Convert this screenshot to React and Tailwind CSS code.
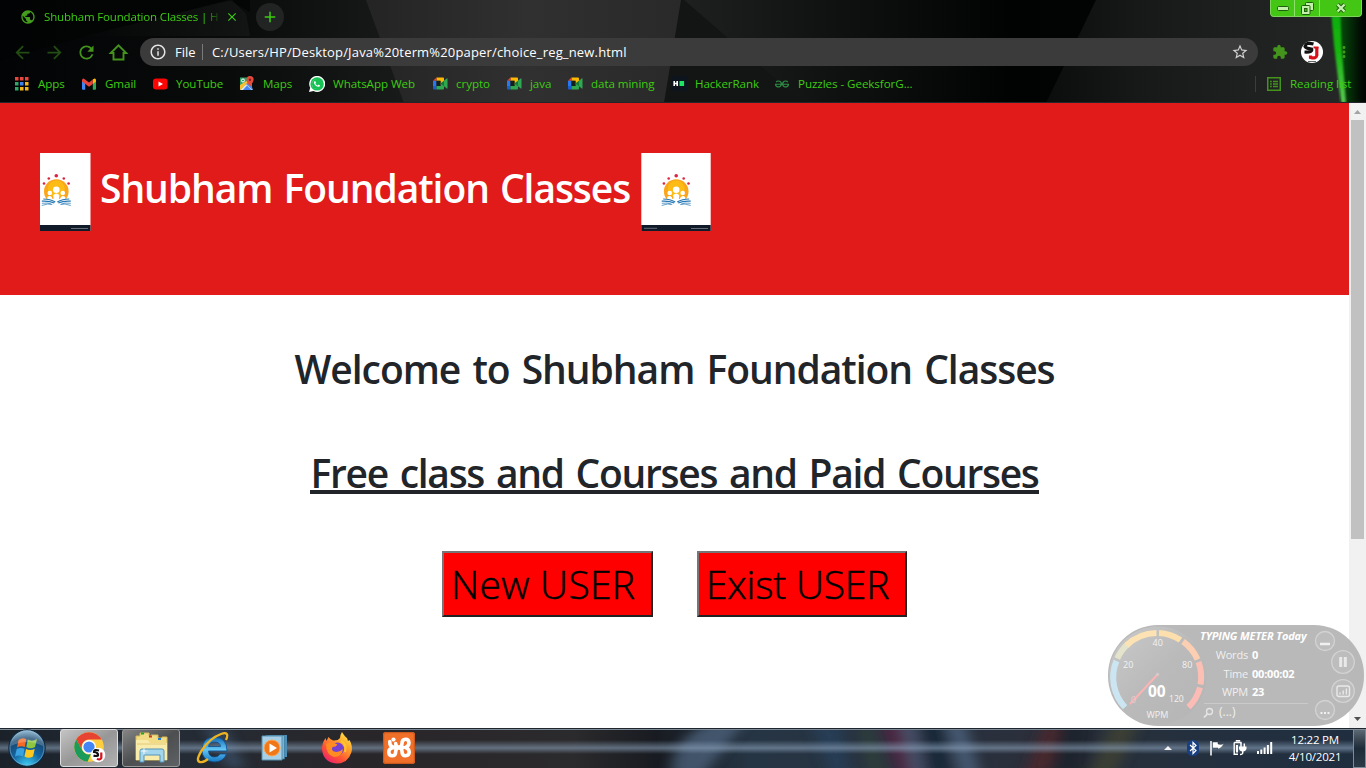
import { MdArrowBack, MdArrowForward, MdRefresh, MdPublic, MdInfoOutline, MdStarBorder, MdExtension, MdMoreVert, MdClose, MdAdd } from "react-icons/md";
import { SiGeeksforgeeks } from "react-icons/si";
import { FaWhatsapp } from "react-icons/fa";

function ThemeBackdrop() {
  return (
    <svg className="absolute inset-0" width="1366" height="103" viewBox="0 0 1366 103" preserveAspectRatio="none">
      <defs>
        <linearGradient id="tbLeft" x1="0" x2="1">
          <stop offset="0" stopColor="#030405" />
          <stop offset=".55" stopColor="#090a0a" />
          <stop offset="1" stopColor="#1a1c1b" />
        </linearGradient>
        <linearGradient id="tbWedge" x1="0" x2="1">
          <stop offset="0" stopColor="#050606" />
          <stop offset="1" stopColor="#191b1b" />
        </linearGradient>
        <linearGradient id="tbMid" x1="0" x2="1">
          <stop offset="0" stopColor="#242424" />
          <stop offset=".5" stopColor="#303030" />
          <stop offset="1" stopColor="#292929" />
        </linearGradient>
        <linearGradient id="tbRight" x1="684" x2="1010" y1="0" y2="0" gradientUnits="userSpaceOnUse">
          <stop offset="0" stopColor="#1e1f1f" />
          <stop offset=".45" stopColor="#101111" />
          <stop offset="1" stopColor="#010303" />
        </linearGradient>
        <linearGradient id="tbFar" x1="1050" x2="1340" y1="0" y2="0" gradientUnits="userSpaceOnUse">
          <stop offset="0" stopColor="#0c0d0d" />
          <stop offset=".3" stopColor="#171818" />
          <stop offset="1" stopColor="#252626" />
        </linearGradient>
        <linearGradient id="tbEdge" x1="1335" x2="1366" y1="0" y2="0" gradientUnits="userSpaceOnUse">
          <stop offset="0" stopColor="#075c0c" />
          <stop offset=".8" stopColor="#020e03" />
          <stop offset="1" stopColor="#010301" />
        </linearGradient>
        <linearGradient id="tbBeam" x1="0" x2="0" y1="0" y2="1">
          <stop offset="0" stopColor="#0ca808" />
          <stop offset=".5" stopColor="#16b70e" />
          <stop offset="1" stopColor="#5ac653" />
        </linearGradient>
        <filter id="soft"><feGaussianBlur stdDeviation=".8" /></filter>
      </defs>
      <rect width="1366" height="103" fill="#020303" />
      <rect width="420" height="103" fill="url(#tbLeft)" />
      <path d="M0 60 L86 36 L228 0 L250 12 L250 0 L0 0Z" fill="#030404" opacity=".8" />
      <path d="M84 36 L232 0 L246 14 L250 36Z" fill="url(#tbWedge)" opacity=".6" />
      <path d="M366 0H688L665 103H404Z" fill="url(#tbMid)" />
      <path d="M684 0H1040V103H664Z" fill="url(#tbRight)" />
      <path d="M684 0L803 103H664L681 0Z" fill="#131414" />
      <path d="M1096 0H1340V103H1046Z" fill="url(#tbFar)" />
      <path d="M1331 0H1366V103H1343Z" fill="url(#tbEdge)" />
      <path d="M1330 0H1340L1341.500 45 1346 103H1341L1334 45Z" fill="url(#tbBeam)" filter="url(#soft)" />
      <rect y="102" width="1366" height="1" fill="#24252a" />
    </svg>
  );
}

function WindowControls() {
  return (
    <div className="absolute left-[1270px] top-0 flex h-[17px] w-[92px] divide-x divide-[#8de06b] overflow-hidden rounded-b border border-t-0 border-[#7ed35c] bg-[#43c614]">
      <div className="flex w-[24px] items-center justify-center">
        <svg width="12" height="6" viewBox="0 0 12 6"><rect x=".5" y="1.500" width="11" height="4" rx="1" fill="#c4f2ad" stroke="#1f5e0c" /></svg>
      </div>
      <div className="flex w-[25px] items-center justify-center">
        <svg width="13" height="13" viewBox="0 0 13 13" fill="#c4f2ad" stroke="#1f5e0c">
          <rect x="4.500" y=".5" width="8" height="8" rx="1" />
          <rect x=".5" y="3.500" width="8.500" height="9" rx="1" />
          <rect x="3.500" y="6.500" width="2.500" height="3" fill="#41bd14" />
        </svg>
      </div>
      <div className="flex flex-1 items-center justify-center">
        <svg width="12" height="12" viewBox="0 0 12 12">
          <path d="M2.500 2.500L9.500 9.500M9.500 2.500L2.500 9.500" stroke="#1f5e0c" strokeWidth="4.200" />
          <path d="M2.500 2.500L9.500 9.500M9.500 2.500L2.500 9.500" stroke="#c4f2ad" strokeWidth="2.400" />
        </svg>
      </div>
    </div>
  );
}

const appColors = ["fill-[#e8453c]", "fill-[#e8453c]", "fill-[#e8453c]", "fill-[#2fa866]", "fill-[#3b82f0]", "fill-[#f2b518]", "fill-[#2fa866]", "fill-[#f2b518]", "fill-[#f2b518]"];

const AppsIcon = () => (
  <svg className="-ml-[2px]" width="14" height="14" viewBox="0 0 14 14">
    {appColors.map((c, i) => <rect key={i} x={(i % 3) * 5} y={Math.floor(i / 3) * 5} width="3.500" height="3.500" className={c} />)}
  </svg>
);
const GmailIcon = () => (
  <svg className="-ml-[2px]" width="14" height="12" viewBox="0 0 14 12">
    <path d="M0 2v9q0 .7.8.7H3.200V5Z" fill="#4285f4" />
    <path d="M14 2v9q0 .7-.8.7H10.800V5Z" fill="#34a853" />
    <path d="M10.800 1.500L12 .7Q14 .2 14 2.200V3.600L10.800 6Z" fill="#fbbc04" />
    <path d="M0 3.600V2.200Q.2.200 2 .7L7 4.500 10.800 1.500V6L7 8.800Z" fill="#ea4335" />
  </svg>
);
const YouTubeIcon = () => (
  <svg width="15" height="12" viewBox="0 0 15 12"><rect y=".5" width="14.500" height="11" rx="3" fill="#fb0505" /><path d="M5.500 3.500v5L10 6Z" fill="#fff" /></svg>
);
const MapsIcon = () => (
  <svg className="-ml-[2px]" width="15" height="15" viewBox="0 0 15 15">
    <path d="M1 1.500H10L13 6V14H1Z" fill="#34a168" />
    <path d="M1 14L8 7l6 7Z" fill="#dfe3e8" />
    <path d="M4 14L8 9.500 12.500 14Z" fill="#4285f4" />
    <path d="M1 9V14L9 6.500 7.500 5Z" fill="#fbc02d" />
    <path d="M8.500 7L13.500 12V14L7 8Z" fill="#4a8bf5" />
    <circle cx="4" cy="4.500" r="1.500" fill="none" stroke="#fff" />
    <path d="M11 0a3.600 3.600 0 0 1 3.600 3.700Q14.400 6 11 10.500 7.600 6 7.500 3.700A3.600 3.600 0 0 1 11 0Z" fill="#e64a3c" />
    <circle cx="11" cy="3.700" r="1.200" fill="#7d1f1a" />
  </svg>
);
const WhatsAppIcon = () => (
  <span className="relative -ml-[2px] flex size-4 shrink-0 items-center justify-center">
    <svg className="absolute" width="16" height="16" viewBox="0 0 16 16"><path d="M0 16L1.200 11.800A8 8 0 1 1 4.500 15Z" fill="#fff" /><circle cx="8.100" cy="7.900" r="6.700" fill="#17c254" /></svg>
    <FaWhatsapp className="relative size-[14px] text-white [clip-path:circle(4.600px)]" />
  </span>
);
const MeetIcon = () => (
  <svg className="-ml-px" width="15" height="13" viewBox="0 0 15 13">
    <path d="M3.500 .5H10a1 1 0 0 1 1 1V6.500L7.500 8V3.800H3.500Z" fill="#fbb904" />
    <path d="M3.500 .5V3.800H0Z" fill="#ea4335" />
    <path d="M0 3.800H3.500V9H0Z" fill="#2878ef" />
    <path d="M0 9H3.500V12.500H1Q0 12.500 0 11.500Z" fill="#1a60d0" />
    <path d="M3.500 9H7.500V6.500L14 1.200Q14.500 1 14.500 1.800V11Q14.500 12 13.800 11.500L11 9.300V11.500a1 1 0 0 1-1 1H3.500Z" fill="#2fa84f" />
    <path d="M3.500 3.800H7.500V9H3.500Z" fill="#14201a" />
    <path d="M7.500 6.500L11 3.800V9.200Z" fill="#16773a" />
  </svg>
);
const HackerRankIcon = () => (
  <svg width="15" height="15" viewBox="0 0 15 15"><rect width="15" height="15" rx="1.500" fill="#0e141e" /><path d="M2.200 5V10M5.200 5V10M2.200 7.500H5.200" stroke="#fff" strokeWidth="1.600" /><rect x="7.500" y="5" width="4.600" height="5" fill="#1ee665" /></svg>
);
const GeeksIcon = () => <SiGeeksforgeeks className="-ml-[2px] size-[14px] text-[#2f8d46]" />;

const bookmarks = [
  { label: "Apps", Icon: AppsIcon, w: "w-[67px]" },
  { label: "Gmail", Icon: GmailIcon, w: "w-[71px]" },
  { label: "YouTube", Icon: YouTubeIcon, w: "w-[87px]" },
  { label: "Maps", Icon: MapsIcon, w: "w-[70px]" },
  { label: "WhatsApp Web", Icon: WhatsAppIcon, w: "w-[123px]" },
  { label: "crypto", Icon: MeetIcon, w: "w-[74px]" },
  { label: "java", Icon: MeetIcon, w: "w-[61px]" },
  { label: "data mining", Icon: MeetIcon, w: "w-[104px]" },
  { label: "HackerRank", Icon: HackerRankIcon, w: "w-[103px]" },
  { label: "Puzzles - GeeksforG...", Icon: GeeksIcon, w: "w-[145px]" },
];

function BrowserChrome() {
  return (
    <header className="relative h-[103px] text-[#3ccc12]">
      <ThemeBackdrop />
      <div className="relative flex h-[103px] flex-col">
        <div className="flex h-[34px] items-center pl-5">
          <MdPublic className="mr-2 size-4 text-[#449d1c]" />
          <span className="mr-[5px] w-[176px] whitespace-nowrap text-[11.500px] tracking-[-0.160px] [mask-image:linear-gradient(to_right,black_91%,rgba(0,0,0,0.2)_99%)]">Shubham Foundation Classes | H</span>
          <MdClose className="size-[14px]" />
          <span className="ml-[17px] flex size-7 items-center justify-center rounded-full bg-[#222424]"><MdAdd className="size-[18px]" /></span>
        </div>
        <div className="flex h-9 items-center pl-[12px] text-[#43931d]">
          <MdArrowBack className="mr-[11px] size-[21px] text-[#234d13]" />
          <MdArrowForward className="mr-[11px] size-[21px] text-[#234d13]" />
          <MdRefresh className="mr-[11px] size-[21px]" />
          <svg className="mr-[11px]" width="21" height="21" viewBox="0 0 21 21"><path d="M2.800 11L10.500 3.300L18.200 11H15.500V17.500H5.500V11Z" fill="none" stroke="currentColor" strokeWidth="1.900" /></svg>
          <div className="flex h-7 w-[1118px] items-center rounded-full bg-[#3b3b3b] pl-[9px] text-[13px] text-white">
            <MdInfoOutline className="mr-2 size-[18px] text-[#e4e4e4]" />
            <span className="w-[27px] pt-[2px]">File</span>
            <span className="mr-[9px] h-4 w-px bg-[#7a7a7a]" />
            <span className="flex-1 whitespace-nowrap pt-[2px] tracking-[0.170px]">C:/Users/HP/Desktop/Java%20term%20paper/choice_reg_new.html</span>
            <MdStarBorder className="mr-[9px] size-[18px] text-[#d0d0d0]" />
          </div>
          <MdExtension className="ml-[14px] size-[16px]" />
          <svg className="ml-[13px]" width="22" height="22" viewBox="0 0 22 22">
            <circle cx="11" cy="11" r="11" fill="#fff" />
            <path d="M12.500 3Q5 .8 4 5.500 5 7.500 10.500 8 12 11.500 3.500 11" fill="none" stroke="#111" strokeWidth="3.200" />
            <path d="M15.800 6V14.500Q15 18 9.500 16.500V14.500" fill="none" stroke="#d8101a" strokeWidth="3.200" />
            <path d="M12.500 6.500H17.500" stroke="#d8101a" strokeWidth="2" />
            <path d="M7 20.500H15" stroke="#666" />
          </svg>
          <MdMoreVert className="ml-[12px] size-[18px] text-[#3f9a1c]" />
        </div>
        <div className="flex h-7 items-center pl-[15px] text-[11.600px] tracking-[-0.060px]">
          {bookmarks.map(({ label, Icon, w }) => (
            <div key={label} className={"flex shrink-0 items-center " + w}>
              <span className="mr-2 flex w-[15px] items-center justify-center"><Icon /></span>
              <span className="whitespace-nowrap">{label}</span>
            </div>
          ))}
          <div className="ml-auto flex w-[111px] items-center">
            <span className="mr-[11px] h-4 w-px bg-[#245014]" />
            <svg className="mr-[9px]" width="14" height="14" viewBox="0 0 14 14" fill="none" stroke="#43931d"><rect x=".75" y=".75" width="12.500" height="12.500" strokeWidth="1.500" /><path d="M3 4.500H4.800M6 4.500H11M3 7H4.800M6 7H11M3 9.500H4.800M6 9.500H11" strokeWidth="1.300" /></svg>
            <span className="whitespace-nowrap">Reading list</span>
          </div>
        </div>
      </div>
      <WindowControls />
    </header>
  );
}

function SunriseArt({ x }) {
  return (
    <g transform={`translate(${x} 0)`}>
      <circle cx="0" cy="38.500" r="12.300" fill="#fba51a" />
      <circle cx="0" cy="36" r="8.500" fill="#fdbb16" />
      <g fill="#dc2340"><circle cy="22.800" r="1.800" /><circle cx="-7.500" cy="25.500" r="1.300" /><circle cx="7.500" cy="25.500" r="1.300" /><circle cx="-12.300" cy="30.500" r="1.300" /><circle cx="12.300" cy="30.500" r="1.300" /></g>
      <g fill="#fff"><circle cy="36.800" r="3.300" /><path d="M-2.700 48L-3 42Q0 39 3 42L2.700 48Z" /><circle cx="-6.500" cy="40" r="2.300" /><circle cx="6.500" cy="40" r="2.300" /><path d="M-9 48V44Q-6.500 42-4.500 44L-3 48ZM9 48V44Q6.500 42 4.500 44L3 48Z" /><path d="M-14 46H14V54H-14Z" /></g>
      <g fill="none" stroke="#2779b5" strokeWidth="1.200"><path d="M-13 46Q-6 46-1 49M13 46Q6 46 1 49M-14.500 48.200Q-7 47.700-2 50M14.500 48.200Q7 47.700 2 50" /><path d="M-14.500 50.300Q-8 49.500-5 51M14.500 50.300Q8 49.500 5 51M-14.500 52.500Q-8 50-4 51.500M14.500 52.500Q8 50 4 51.500" strokeWidth=".7" /></g>
    </g>
  );
}

function PageHeader() {
  return (
    <div className="flex h-[192px] items-start bg-[#e11a1a] pl-10 pt-[50px]">
      <svg width="51" height="78" viewBox="0 0 51 78"><rect width="50.500" height="78" fill="#fff" /><SunriseArt x={16.300} /><rect y="72" width="50.500" height="6" fill="#101a29" /><path d="M31 75.500H48" stroke="#8b929b" strokeWidth=".7" /></svg>
      <h1 className="ml-[9px] mt-[11px] w-[541px] whitespace-nowrap text-[39px] font-semibold leading-[48px] tracking-[-1.060px] text-white [word-spacing:2px]">Shubham Foundation Classes</h1>
      <svg width="70" height="78" viewBox="0 0 70 78"><rect x=".3" width="69.400" height="78" fill="#fff" /><SunriseArt x={35.200} /><rect x=".3" y="72" width="69.400" height="6" fill="#101a29" /><path d="M3 75.300H16M50 75.500H67" stroke="#8b929b" strokeWidth=".7" /></svg>
    </div>
  );
}

const userButton = "h-[66px] whitespace-nowrap border-2 border-b-[#222] border-l-[#767676] border-r-[#222] border-t-[#767676] bg-[#ff0000] pb-[3px] pl-[7px] pt-[3px] text-left text-[39px] font-light leading-[56px] text-black [-webkit-text-stroke:0.5px_black]";

function PageContent() {
  return (
    <main className="flex-1 bg-white">
      <PageHeader />
      <div className="flex flex-col items-center text-[39px] font-semibold leading-[48px] text-[#212529] [word-spacing:3px]">
        <h2 className="mt-[50px] whitespace-nowrap tracking-[-1.030px]">Welcome to Shubham Foundation Classes</h2>
        <h2 className="mt-14 h-[45px] whitespace-nowrap border-b-4 border-[#212529] tracking-[-1.290px]">Free class and Courses and Paid Courses</h2>
      </div>
      <div className="mt-[57px] flex justify-center gap-11">
        <button className={userButton + " w-[211px] tracking-[0.300px]"}>New USER</button>
        <button className={userButton + " w-[210px] tracking-[-0.200px]"}>Exist USER</button>
      </div>
    </main>
  );
}

function Scrollbar() {
  return (
    <div className="flex w-[17px] flex-col items-center bg-[#f1f1f1]">
      <svg width="17" height="17" viewBox="0 0 17 17"><path d="M5 11L8.500 7L12 11Z" fill="#a3a3a3" /></svg>
      <div className="h-[419px] w-[13px] bg-[#c1c1c1]" />
      <svg className="mt-auto" width="17" height="17" viewBox="0 0 17 17"><path d="M5 6L8.500 10L12 6Z" fill="#505050" /></svg>
    </div>
  );
}

const dial = [
  { d: "M24.500 89.700A43.500 43.500 0 0 1 15.900 43.500", c: "#cbe6f2" },
  { d: "M16.800 41A43.500 43.500 0 0 1 28 26", c: "#e4e4cc" },
  { d: "M26 28A43.500 43.500 0 0 1 56 15.500", c: "#fde3b4" },
  { d: "M58.500 15.500A43.500 43.500 0 0 1 80 22.500", c: "#fddfae" },
  { d: "M82.500 24A43.500 43.500 0 0 1 97 42", c: "#fcceb2" },
  { d: "M98 44.500A43.500 43.500 0 0 1 100 67", c: "#fcbfb4" },
  { d: "M99.500 70A43.500 43.500 0 0 1 88 89.700", c: "#fcbcb6" },
];

function TypingMeter() {
  return (
    <aside className="absolute left-[1108px] top-[625px] h-[101px] w-[256px] rounded-[50px] bg-[#b1b1b1]/90 text-white">
      <svg className="absolute inset-0" width="256" height="101" viewBox="0 0 256 101">
        <defs><linearGradient id="face" x1="0" y1="0" x2="1" y2="1"><stop offset="0" stopColor="#cacaca" /><stop offset=".5" stopColor="#bababa" /><stop offset="1" stopColor="#b5b5b5" /></linearGradient></defs>
        <circle cx="50" cy="50.500" r="49" fill="url(#face)" />
        <g transform="translate(-7.500 -7.500)" fill="none" strokeWidth="6">
          {dial.map(({ d, c }) => <path key={d} d={d} stroke={c} />)}
        </g>
        <path d="M49.500 49.500L22 79" stroke="#fbb4b4" strokeWidth="2" />
        <circle cx="49.500" cy="49.500" r="1.800" fill="#d6c8c8" />
        <g fill="#f2f2f2" fontSize="9">
          <text x="44.500" y="20.500">40</text><text x="15" y="42.500">20</text><text x="74" y="42.500">80</text><text x="23" y="78" fill="#e5cccc">0</text>
          <text x="61" y="77" fontSize="8.600">120</text><text x="38.500" y="93" fontSize="9">WPM</text>
          <text x="40" y="71.500" fontSize="15.500" fontWeight="700" fill="#fff">00</text>
        </g>
        <path d="M96 78.500H200" stroke="#cacaca" />
        <g fill="#bdbdbd" stroke="#d3d3d3" strokeWidth="1.300">
          <circle cx="217" cy="16" r="9.500" /><circle cx="235" cy="37" r="11.300" /><circle cx="235" cy="66" r="11.300" /><circle cx="217" cy="85" r="9.500" />
        </g>
        <path d="M212 19H222" stroke="#f0f0f0" strokeWidth="2.500" />
        <path d="M232.700 32V42M237.300 32V42" stroke="#e9e9e9" strokeWidth="3" />
        <g stroke="#e9e9e9" fill="none" strokeWidth="1.400"><rect x="229" y="61" width="12.500" height="10.500" rx="2" /><path d="M232 69.500V67.500M235.200 69.500V65.500M238.400 69.500V63.500" /></g>
        <path d="M212.500 88H214.500M216 88H218M219.500 88H221.500" stroke="#f0f0f0" strokeWidth="2" />
        <g stroke="#e6e6e6" fill="none" strokeWidth="1.300"><circle cx="101.500" cy="86.500" r="3" /><path d="M99.300 89L96 92.500" strokeWidth="1.800" /></g>
      </svg>
      <div className="relative flex w-[200px] flex-col pl-[92px] pt-[3px]">
        <div className="h-[18px] w-[108px] whitespace-nowrap text-[11px] font-bold italic leading-[15px] tracking-[-0.140px]">TYPING METER Today</div>
        <dl className="grid grid-cols-[48px_1fr] gap-x-1 text-[11px] leading-[18.500px] tracking-[-0.200px]">
          <dt className="text-right text-[#f0f0f0]">Words</dt><dd className="font-bold">0</dd>
          <dt className="text-right text-[#f0f0f0]">Time</dt><dd className="font-bold">00:00:02</dd>
          <dt className="text-right text-[#f0f0f0]">WPM</dt><dd className="font-bold">23</dd>
        </dl>
        <div className="pl-[19px] pt-[2px] text-[12px] leading-4 text-[#f0f0f0]">(...)</div>
      </div>
    </aside>
  );
}

function TaskbarBackdrop() {
  return (
    <svg className="absolute inset-0" width="1366" height="40" viewBox="0 0 1366 40">
      <defs>
        <linearGradient id="bar" x1="0" x2="1"><stop offset="0" stopColor="#1b2129" /><stop offset=".12" stopColor="#242c36" /><stop offset=".27" stopColor="#292629" /><stop offset=".42" stopColor="#2b2a2c" /><stop offset=".48" stopColor="#181b21" /><stop offset=".55" stopColor="#263544" /><stop offset=".75" stopColor="#2a2f3b" /><stop offset=".84" stopColor="#26303d" /><stop offset="1" stopColor="#1f2e40" /></linearGradient>
        <linearGradient id="band" x1="0" y1="0" x2="0" y2="1"><stop offset=".3" stopColor="#8fa6bf" stopOpacity="0" /><stop offset=".5" stopColor="#8fa6bf" stopOpacity=".58" /><stop offset=".65" stopColor="#8fa6bf" stopOpacity="0" /></linearGradient>
        <filter id="glass" x="-20%" width="140%"><feGaussianBlur stdDeviation="7 3" /></filter>
      </defs>
      <rect width="1366" height="40" fill="url(#bar)" />
      <g filter="url(#glass)" opacity=".8">
        <path d="M205 0H225L245 40H228Z" fill="#3b5069" />
        <path d="M672 46Q671 8 715 -6H745L704 46Z" fill="#4c6079" />
        <path d="M810 -6H840L850 46H830Z" fill="#26415a" /><path d="M860 -6H868L885 46H870Z" fill="#334538" />
        <path d="M880 -6H900L913 46H898Z" fill="#572342" /><path d="M900 -6H915L925 46H912Z" fill="#505a76" />
        <path d="M920 -6H945L952 46H930Z" fill="#142739" /><path d="M945 -6H965L980 46H960Z" fill="#4d647f" />
        <path d="M1045 -6H1075L1045 46H1025Z" fill="#51252c" /><path d="M1060 -6H1095L1085 46H1050Z" fill="#1b2129" />
        <path d="M1112 -6H1140L1115 46H1090Z" fill="#404332" />
      </g>
      <rect width="1366" height="40" fill="url(#band)" />
      <rect width="1366" height="1" fill="#20262e" /><rect y="1" width="1366" height="1" fill="#7d8b99" />
    </svg>
  );
}

function StartOrb() {
  return (
    <svg width="38" height="38" viewBox="0 0 38 38">
      <defs><radialGradient id="orb" cx=".5" cy="1" r=".95"><stop offset="0" stopColor="#3ed3fa" /><stop offset=".45" stopColor="#1565a2" /><stop offset=".8" stopColor="#17466f" /><stop offset="1" stopColor="#6a9dbd" /></radialGradient></defs>
      <circle cx="19" cy="19" r="18.200" fill="url(#orb)" stroke="#0c2740" />
      <circle cx="19" cy="19" r="17" fill="none" stroke="#86b1ca" strokeOpacity=".6" />
      <path d="M10.500 11Q14 8 18.300 10L16.800 18Q12.500 16.500 9 18.500Z" fill="#f26a26" />
      <path d="M19.800 10.500Q24 13 29 10L27 18Q22.500 20.500 18.300 18Z" fill="#8dc63f" />
      <path d="M8.700 20Q12.500 18 16.500 19.700L15 27.500Q11 25.500 7 27.500Z" fill="#3ba2e0" />
      <path d="M18 20Q22 22 26.700 20L25 27.500Q20.500 30 16.500 27.500Z" fill="#ffc81f" />
      <path d="M3 17A16 16 0 0 1 35 17Q19 9 3 17Z" fill="#fff" opacity=".22" />
    </svg>
  );
}
function ChromeLogo() {
  return (
    <svg width="34" height="34" viewBox="0 0 34 34">
      <circle cx="17" cy="16" r="14.800" fill="#ffcd40" />
      <path d="M4.200 8.600A14.800 14.800 0 0 1 29.800 8.600H17A7.400 7.400 0 0 0 10.600 19.700Z" fill="#e64333" />
      <path d="M4.200 8.600L10.600 19.700A7.400 7.400 0 0 0 19 23L15.500 30.700A14.800 14.800 0 0 1 4.200 8.600Z" fill="#1b9b5a" />
      <circle cx="17" cy="16" r="7" fill="#fff" /><circle cx="17" cy="16" r="5.600" fill="#4285f4" />
      <circle cx="26" cy="24" r="7.300" fill="#fff" />
      <path d="M27 19.500Q22 18 22 21 26.500 21.500 26 24.500 24 25.500 21.500 24.500" fill="none" stroke="#111" strokeWidth="2.200" /><path d="M29.300 21.500V27Q28 29.500 25 27.800" fill="none" stroke="#d8101a" strokeWidth="2.200" />
    </svg>
  );
}
function ExplorerLogo() {
  return (
    <svg width="34" height="34" viewBox="0 0 34 34">
      <path d="M2 5H6V2H15V5H17V4H24V7H28V6H33V29H2Z" fill="#f1dc85" stroke="#d6b95b" />
      <path d="M2 9H14L16 12H33V29H2Z" fill="#f9ebaa" /><path d="M3 13H32" stroke="#e2ca79" />
      <path d="M7 2.500H10" stroke="#14a82d" strokeWidth="2" /><path d="M15 5.500H18" stroke="#c83d25" strokeWidth="2" /><path d="M24 8H27" stroke="#257dc5" strokeWidth="2" />
      <path d="M6 31V20Q6 18 8 18H28Q30 18 30 20V31H26V24H10V31Z" fill="#a3d6ed" stroke="#5593b9" />
      <path d="M10 15L10.800 19.200 15 20 10.800 20.800 10 25 9.200 20.800 5 20 9.200 19.200Z" fill="#fff" opacity=".7" />
    </svg>
  );
}
function ExplorerELogo() {
  return (
    <svg width="34" height="34" viewBox="0 0 34 34">
      <defs><linearGradient id="ie" x1="0" y1="0" x2="0" y2="1"><stop offset="0" stopColor="#1169b5" /><stop offset=".5" stopColor="#63c5f4" /><stop offset="1" stopColor="#1678c4" /></linearGradient></defs>
      <path d="M31 20H12.500Q13 26 18.500 26 22.500 26 24 23H30.500Q27.500 31 18 31 5.500 30 6 18 7 6 18.500 6 31 6.500 31 20ZM12.500 15.500H24.500Q24 11 18.500 11 13.500 11 12.500 15.500Z" fill="url(#ie)" stroke="#0e4d8c" strokeWidth=".8" />
      <path d="M30 9Q34 0 25 3 14 7 6 19-1 30 4 31 7 32 12 28" fill="none" stroke="#eeb321" strokeWidth="2.300" />
    </svg>
  );
}
function MediaLogo() {
  return (
    <svg width="28" height="28" viewBox="0 0 28 28">
      <path d="M8 1H26V23H8Z" fill="#4f8fb5" /><path d="M5 1.500H23.500V25H5Z" fill="#79b4d5" stroke="#3b799e" strokeWidth=".7" /><path d="M1 2H21V26H1Z" fill="#a7cfe5" stroke="#5790b1" />
      <circle cx="11" cy="14" r="8" fill="#f07818" stroke="#faaa60" /><path d="M8.500 9.500V18.500L16 14Z" fill="#fff" />
    </svg>
  );
}
function FirefoxLogo() {
  return (
    <svg width="32" height="34" viewBox="0 0 32 34">
      <defs><linearGradient id="ffx" x1=".9" y1="0" x2=".2" y2="1"><stop offset="0" stopColor="#fff04a" /><stop offset=".35" stopColor="#ffa52b" /><stop offset=".7" stopColor="#ff5134" /><stop offset="1" stopColor="#e81f76" /></linearGradient></defs>
      <path d="M21 1Q24 6 26 7L27 10 28.500 9Q32 15 30.500 21 27 32.500 15.500 32.500 2 31.500 1 18 1 12 4.500 7L5.500 10Q7 7 7.500 6 9 8 12 9.500 17 10 19 7 19.500 3 21 1Z" fill="url(#ffx)" />
      <circle cx="16.500" cy="18" r="6.500" fill="#7541d3" />
      <path d="M5 13Q11 10 16.500 13.500 15 16 11.500 16 10 19 13 20.500 18 22 22 18 21 26 13 26 5 24 5 13Z" fill="#ff8c22" />
      <path d="M20 10Q26 13 24 21" fill="none" stroke="#ffc632" strokeWidth="2" />
    </svg>
  );
}
function XamppLogo() {
  return (
    <svg width="32" height="32" viewBox="0 0 32 32">
      <rect width="32" height="32" rx="2.500" fill="#f0702a" /><rect x=".7" y=".7" width="30.600" height="30.600" rx="2" fill="none" stroke="#c4541a" />
      <g fill="none" stroke="#fff" strokeWidth="3.600" strokeLinecap="round" strokeLinejoin="round">
        <path d="M6.800 9.500V10.500Q6.800 14.500 11 15.500H20.500" />
        <path d="M10.500 15.500Q5.800 16.500 5.800 20.200 6 23.800 9.300 23.800 12.700 23.800 12.700 19.500 13 16 16 15.800 18.800 16 19 19.500 19 23.800 22.500 23.800 26.200 23.500 26.200 20 26 16.500 22.500 15.500 26 14 26 10.800 25.800 7.200 22.500 7.200 19 7.200 19 11.500 18.800 15 16 15.500 12.800 15 12.700 11.500" />
      </g>
      <circle cx="10.500" cy="7.600" r="2.100" fill="#fff" />
    </svg>
  );
}

function Tray() {
  return (
    <div className="ml-auto flex items-center text-white">
      <svg className="mr-[14px]" width="10" height="6" viewBox="0 0 10 6"><path d="M1 5L5 1L9 5Z" fill="#f3f3f3" /></svg>
      <svg className="mr-[10px]" width="12" height="16" viewBox="0 0 12 16"><rect width="12" height="16" rx="5.500" fill="#173f82" /><path d="M3 5L9 10.500 6 13.500V2.500L9 5.500 3 11" fill="none" stroke="#fff" strokeWidth="1.200" /></svg>
      <svg className="mr-[8px]" width="16" height="16" viewBox="0 0 16 16"><path d="M2 1V15.500" stroke="#fff" strokeWidth="1.500" /><path d="M3.500 2H9V4Q12 5 15 3.500Q13 8 9 9.500V8H3.500Z" fill="#fff" stroke="#273443" strokeWidth=".5" /></svg>
      <svg className="mr-[10px]" width="14" height="16" viewBox="0 0 14 16"><path d="M3.500 1.500V.7H6.500V1.500M1.200 2.500H8V4M5 14.300H1.200V2.500" fill="none" stroke="#fff" strokeWidth="1.400" /><path d="M3 5H5V12.500H3Z" fill="#fff" /><path d="M8 3.500V7M11.300 3.500V7M9.700 10V13Q9.500 14.500 7 14.500" fill="none" stroke="#fff" strokeWidth="1.500" /><path d="M6 6.500H13.500V8.500Q13 11.500 9.700 11.500 6.500 11.500 6 8.500Z" fill="#fff" /></svg>
      <svg className="mr-[12px]" width="16" height="12" viewBox="0 0 16 12" fill="#fff"><rect y="9" width="2" height="3" /><rect x="3.300" y="7.500" width="2" height="4.500" /><rect x="6.600" y="5.500" width="2" height="6.500" /><rect x="9.900" y="3" width="2" height="9" /><rect x="13.200" width="2" height="12" /></svg>
      <div className="w-[60px] text-center text-[11.500px] leading-[17px] tracking-[-0.200px]"><div>12:22 PM</div><div>4/10/2021</div></div>
      <div className="ml-[8px] h-[39px] w-[13px] border border-[#7d8a97] bg-gradient-to-b from-[#5c6873] via-[#1e2b38] to-[#2c3a48]" />
    </div>
  );
}

function Taskbar() {
  return (
    <footer className="relative h-10">
      <TaskbarBackdrop />
      <div className="relative flex h-10 items-center pl-2">
        <StartOrb />
        <div className="ml-[14px] flex h-[38px] w-[58px] items-center justify-center rounded-[3px] border border-[#dcdcdc] bg-gradient-to-br from-[#c4c4c4] via-[#979797] to-[#b0b0b0]"><ChromeLogo /></div>
        <div className="ml-1 flex h-[38px] w-[58px] items-center justify-center rounded-[3px] border border-[#9a9a9a] bg-gradient-to-br from-[#858585] via-[#4c4e50] to-[#5f6265]"><ExplorerLogo /></div>
        <div className="ml-[16px] flex items-center"><ExplorerELogo /><span className="ml-[31px]"><MediaLogo /></span><span className="ml-[32px]"><FirefoxLogo /></span><span className="ml-[30px]"><XamppLogo /></span></div>
        <Tray />
      </div>
    </footer>
  );
}

export default function App() {
  return (
    <div className="relative flex h-[768px] w-[1366px] flex-col overflow-hidden bg-white font-['Open_Sans','Noto_Sans',sans-serif]">
      <BrowserChrome />
      <div className="flex min-h-0 flex-1">
        <PageContent />
        <Scrollbar />
      </div>
      <Taskbar />
      <TypingMeter />
    </div>
  );
}
